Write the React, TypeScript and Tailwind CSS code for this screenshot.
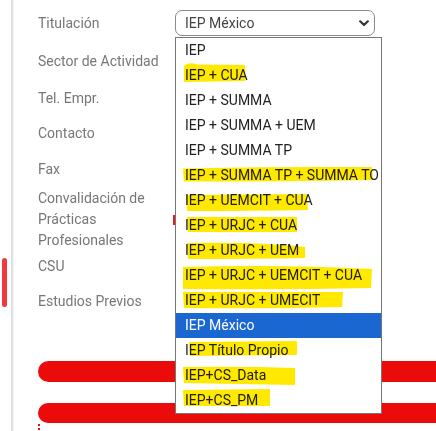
import React from "react";

const items = [
  "IEP",
  "IEP + CUA",
  "IEP + SUMMA",
  "IEP + SUMMA + UEM",
  "IEP + SUMMA TP",
  "IEP + SUMMA TP + SUMMA TO",
  "IEP + UEMCIT + CUA",
  "IEP + URJC + CUA",
  "IEP + URJC + UEM",
  "IEP + URJC + UEMCIT + CUA",
  "IEP + URJC + UMECIT",
  "IEP México",
  "IEP Título Propio",
  "IEP+CS_Data",
  "IEP+CS_PM",
];

const marks = [
  "M184,66 Q188,61.5 197,64.5 L245,65 L245.5,81 L184,82 Z",
  "M183,168.5 Q250,166.5 372,167 L373,180 Q280,181.5 184,181.5 Z",
  "M186,195 L307,194 L308,210 Q250,211 187,211 Z",
  "M187,217 L297,217 L297,232 L188,232 Z",
  "M187,243 Q260,242 305,247 L305,258 Q250,259 188,259 Z",
  "M183,267 Q280,264 372,269 L371,288 Q280,290 183,289 Z",
  "M183,292 L343,292 L342,307 Q260,309 184,308 Z",
  "M189,342 L297,341 L297,355 L190,356 Z",
  "M183,367 Q240,366 295,368 L295,385 Q240,384 184,383 Z",
  "M183,390 L270,389 L270,406 L184,406 Z",
];

export default function App() {
  return (
    <div className="relative flex h-[431px] w-[436px] overflow-hidden bg-white font-['Roboto','Liberation_Sans',sans-serif] text-[14px]">
      {/* left gutter */}
      <div className="w-[11px] shrink-0">
        <div className="ml-[2px] mt-[258px] h-[49px] w-[5px] rounded-full bg-[#ef3a3f]" />
      </div>
      <div className="w-[3px] shrink-0 bg-linear-to-r from-[#d9d9d9] to-[#f5f5f5]" />

      {/* form */}
      <div className="flex flex-1 flex-col pl-[24px] pt-[10px] leading-[21px] text-[#777]">
        <div className="flex items-center">
          <div className="w-[137px] shrink-0">Titulación</div>
          <div className="relative z-10 flex h-[26px] w-[200px] items-center justify-between rounded-[7px] border border-[#8a8a8a] pl-[9px] pr-[4px] text-[#444]">
            <span>IEP México</span>
            <svg width="10" height="7" viewBox="0 0 10 7" className="mr-[1px]">
              <path d="M1.2 1.3 L5 5 L8.8 1.3" fill="none" stroke="#333" strokeWidth="2.2" strokeLinecap="round" strokeLinejoin="round" />
            </svg>
            <ul className="absolute left-[-1px] top-[26px] w-[207px] overflow-hidden border border-[#767676] bg-white text-[#222]">
              {items.map((t) => (
                <li
                  key={t}
                  className={
                    t === "IEP México"
                      ? "h-[25px] whitespace-nowrap bg-[#1a67d2] pl-[9px] leading-[25px] text-white"
                      : "h-[25px] whitespace-nowrap pl-[9px] leading-[25px]"
                  }
                >
                  {t}
                </li>
              ))}
            </ul>
          </div>
        </div>
        <div className="mt-[15px]">Sector de Actividad</div>
        <div className="mt-[16px]">Tel. Empr.</div>
        <div className="mt-[14px]">Contacto</div>
        <div className="mt-[15px]">Fax</div>
        <div className="mt-[8px]">
          Convalidación de
          <br />
          Prácticas
          <br />
          Profesionales
        </div>
        <div className="mt-[5px]">CSU</div>
        <div className="mt-[14px]">Estudios Previos</div>
        <div className="mt-[49px] h-[21px] rounded-l-full bg-[#ec0b0b]" />
        <div className="mt-[21px] h-[20px] rounded-l-full bg-[#ec0b0b]" />
        <div className="mt-[1px] flex flex-col gap-[2px]">
          <div className="h-[2px] w-[2px] bg-[#ec0b0b]" />
          <div className="h-[2px] w-[2px] bg-[#ec0b0b]" />
        </div>
      </div>

      {/* small red edge peeking behind the list */}
      <div className="absolute left-[173px] top-[215px] h-[10px] w-[2px] bg-[#e51c1c]" />

      {/* highlighter strokes */}
      <svg
        className="pointer-events-none absolute inset-0 z-20 mix-blend-multiply"
        width="436"
        height="431"
        viewBox="0 0 436 431"
      >
        {marks.map((d, i) => (
          <path key={i} d={d} fill="#ffe900" />
        ))}
      </svg>
    </div>
  );
}
